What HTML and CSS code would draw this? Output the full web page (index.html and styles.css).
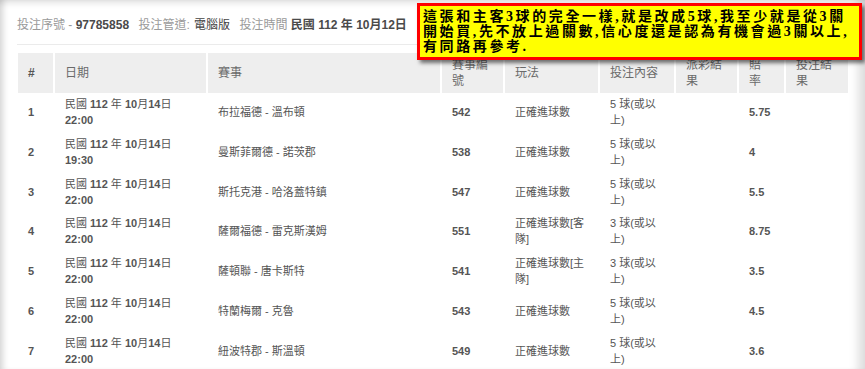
FILE: index.html
```html
<!DOCTYPE html>
<html lang="zh-Hant">
<head>
<meta charset="utf-8">
<title>投注明細</title>
<link rel="stylesheet" href="styles.css">
</head>
<body>
<div class="frame">
  <div class="info">
    <span class="lbl">投注序號 - </span><b class="v">97785858</b>
    <span class="lbl gap">投注管道:</span>
    <span class="v2">電腦版</span>
    <span class="lbl gap">投注時間</span>
    <b class="v">民國 112 年 10月12日</b>
  </div>
  <table class="bets">
    <thead>
      <tr>
        <th class="c-no">#</th>
        <th class="c-date">日期</th>
        <th class="c-match">賽事</th>
        <th class="c-code">賽事編<br>號</th>
        <th class="c-play">玩法</th>
        <th class="c-pick">投注內容</th>
        <th class="c-pay">派彩結<br>果</th>
        <th class="c-odds">賠<br>率</th>
        <th class="c-res">投注結<br>果</th>
      </tr>
    </thead>
    <tbody>
      <tr>
        <td class="num">1</td>
        <td>民國 <b>112</b> 年 <b>10</b>月<b>14</b>日<br><b>22:00</b></td>
        <td>布拉福德 - 溫布頓</td>
        <td class="num">542</td>
        <td>正確進球數</td>
        <td>5 球(或以<br>上)</td>
        <td></td>
        <td class="num">5.75</td>
        <td></td>
      </tr>
      <tr>
        <td class="num">2</td>
        <td>民國 <b>112</b> 年 <b>10</b>月<b>14</b>日<br><b>19:30</b></td>
        <td>曼斯菲爾德 - 諾茨郡</td>
        <td class="num">538</td>
        <td>正確進球數</td>
        <td>5 球(或以<br>上)</td>
        <td></td>
        <td class="num">4</td>
        <td></td>
      </tr>
      <tr>
        <td class="num">3</td>
        <td>民國 <b>112</b> 年 <b>10</b>月<b>14</b>日<br><b>22:00</b></td>
        <td>斯托克港 - 哈洛蓋特鎮</td>
        <td class="num">547</td>
        <td>正確進球數</td>
        <td>5 球(或以<br>上)</td>
        <td></td>
        <td class="num">5.5</td>
        <td></td>
      </tr>
      <tr>
        <td class="num">4</td>
        <td>民國 <b>112</b> 年 <b>10</b>月<b>14</b>日<br><b>22:00</b></td>
        <td>薩爾福德 - 雷克斯漢姆</td>
        <td class="num">551</td>
        <td>正確進球數[客<br>隊]</td>
        <td>3 球(或以<br>上)</td>
        <td></td>
        <td class="num">8.75</td>
        <td></td>
      </tr>
      <tr>
        <td class="num">5</td>
        <td>民國 <b>112</b> 年 <b>10</b>月<b>14</b>日<br><b>22:00</b></td>
        <td>薩頓聯 - 唐卡斯特</td>
        <td class="num">541</td>
        <td>正確進球數[主<br>隊]</td>
        <td>3 球(或以<br>上)</td>
        <td></td>
        <td class="num">3.5</td>
        <td></td>
      </tr>
      <tr>
        <td class="num">6</td>
        <td>民國 <b>112</b> 年 <b>10</b>月<b>14</b>日<br><b>22:00</b></td>
        <td>特蘭梅爾 - 克魯</td>
        <td class="num">543</td>
        <td>正確進球數</td>
        <td>5 球(或以<br>上)</td>
        <td></td>
        <td class="num">4.5</td>
        <td></td>
      </tr>
      <tr>
        <td class="num">7</td>
        <td>民國 <b>112</b> 年 <b>10</b>月<b>14</b>日<br><b>22:00</b></td>
        <td>紐波特郡 - 斯溫頓</td>
        <td class="num">549</td>
        <td>正確進球數</td>
        <td>5 球(或以<br>上)</td>
        <td></td>
        <td class="num">3.6</td>
        <td></td>
      </tr>
    </tbody>
  </table>
  <div class="note">這張和主客3球的完全一樣,就是改成5球,我至少就是從3關<br>開始買,先不放上過關數,信心度還是認為有機會過3關以上,<br>有同路再參考.</div>
</div>
</body>
</html>
```

FILE: styles.css
```css
* { box-sizing: border-box; }
html, body { margin: 0; padding: 0; background: #fff; }
body {
  font-family: "Liberation Sans", "Noto Sans CJK TC", sans-serif;
  color: #555;
}
.frame {
  position: relative;
  height: 369px;
  overflow: hidden;
  padding: 17px 17px 0 18px;
  box-shadow:
    inset 7px 0 6px -4px rgba(0,0,0,0.16),
    inset 0 7px 6px -4px rgba(0,0,0,0.12),
    inset -14px 0 10px -7px rgba(0,0,0,0.13);
}
.info {
  font-size: 12px;
  line-height: 16px;
  padding-bottom: 11px;
  border-bottom: 1px solid #ebebeb;
  margin-left: -1px;
  white-space: nowrap;
}
.info .lbl { color: #9a9a9a; }
.info .gap { margin-left: 6px; }
.info .v { color: #4a4a4a; font-weight: bold; }
.info .v2 { color: #444; margin-left: 1px; }

.bets {
  margin-top: 8px;
  width: 830px;
  table-layout: fixed;
  border-collapse: separate;
  border-spacing: 0;
}
.bets th {
  background: #eeeeee;
  color: #6a6a6a;
  font-weight: normal;
  font-size: 12px;
  line-height: 16px;
  height: 40px;
  padding: 4px 10px;
  text-align: left;
  vertical-align: middle;
  border-left: 2px solid #fff;
}
.bets th.c-no { border-left: 0; font-weight: bold; color: #555; }
.c-no { width: 35px; }
.c-date { width: 153px; }
.c-match { width: 234px; }
.c-code { width: 63px; }
.c-play { width: 95px; }
.c-pick { width: 76px; }
.c-pay { width: 63px; }
.c-odds { width: 47px; }
.c-res { width: 64px; }

.bets td {
  font-size: 11px;
  line-height: 15.9px;
  padding: 4px 10px;
  vertical-align: middle;
  text-align: left;
  border-left: 2px solid transparent;
  color: #555;
  white-space: nowrap;
}
.bets td:first-child { border-left: 0; }
.bets td.num { font-weight: bold; }
.bets td b { font-weight: bold; }

.note {
  position: absolute;
  left: 417px;
  top: 3px;
  width: 445px;
  height: 57px;
  border: 3px solid #ff0000;
  background: #ffff00;
  color: #000;
  font-family: "Liberation Serif", "Noto Sans CJK TC", serif;
  font-weight: bold;
  font-size: 14px;
  line-height: 15px;
  letter-spacing: 2.6px;
  padding: 3px 0 0 3px;
  white-space: nowrap;
  box-shadow: 3px 3px 4px rgba(0,0,0,0.55);
}
```
